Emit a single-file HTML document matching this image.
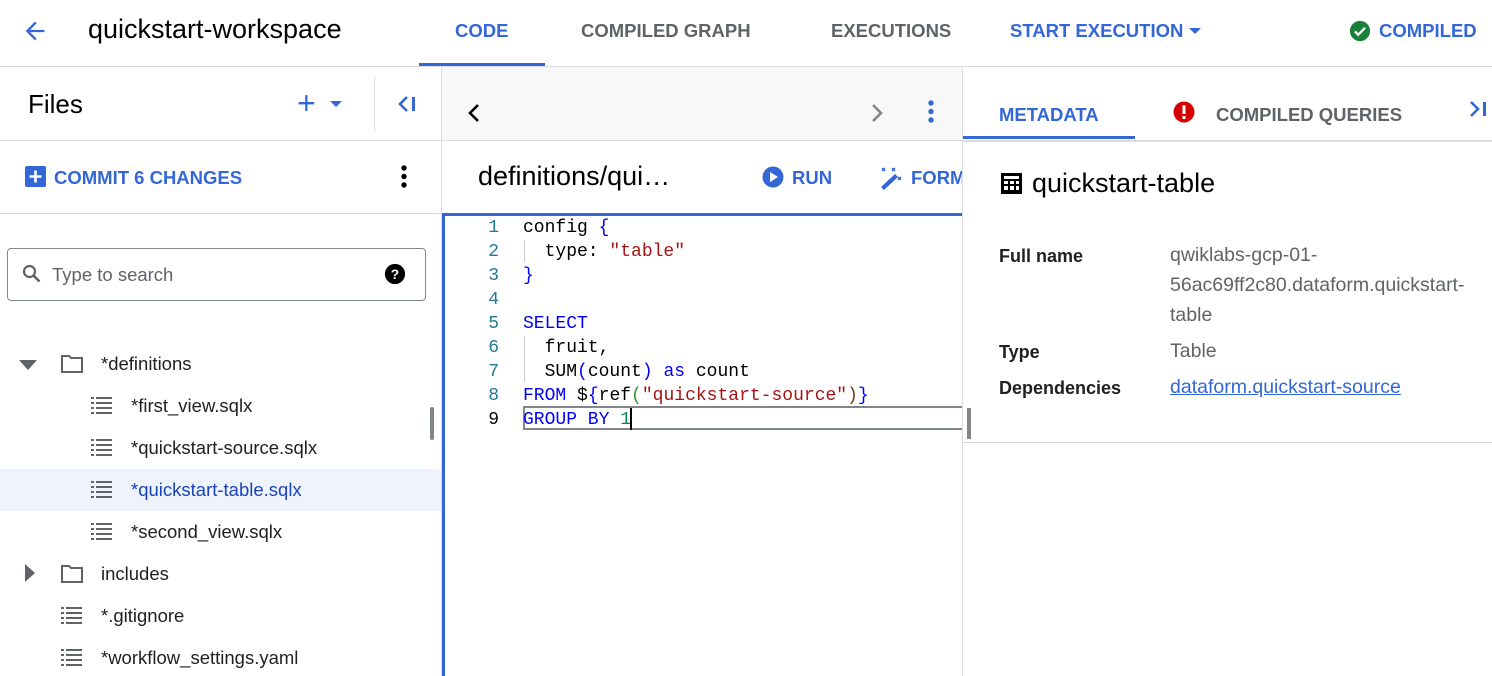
<!DOCTYPE html>
<html><head><meta charset="utf-8"><style>
*{margin:0;padding:0;box-sizing:border-box}
body{width:1492px;height:676px;overflow:hidden;background:#fff;font-family:"Liberation Sans",Arial,sans-serif;color:#202124;position:relative}
.a{position:absolute;white-space:nowrap}
.tab{font-size:18.5px;font-weight:bold;color:#5f6368;top:20px}
.blue{color:#3367d6}
.line{position:absolute;background:#dadce0}
.tree{font-size:18.5px;color:#202124}
.ln{position:absolute;left:446px;width:53px;text-align:right;color:#237893;font-family:"Liberation Mono",monospace;font-size:18px}
.cl{position:absolute;left:523px;font-family:"Liberation Mono",monospace;font-size:18px;color:#000;white-space:pre}
.k{color:#0000ff}.s{color:#a31515}.n{color:#098658}
.lbl{font-size:18px;font-weight:bold;color:#202124}
.val{font-size:19.5px;color:#5f6368;line-height:30px}
</style></head><body>
<svg class="a" style="left:21px;top:17px" width="28" height="28" viewBox="0 0 24 24"><path d="M20 11H7.8l5.6-5.6L12 4l-8 8 8 8 1.4-1.4L7.8 13H20z" fill="#3367d6"/></svg>
<div class="a" style="left:88px;top:14px;font-size:27px;color:#000">quickstart-workspace</div>
<div class="a tab blue" style="left:455px">CODE</div>
<div class="a" style="left:419px;top:63px;width:126px;height:3px;background:#3367d6"></div>
<div class="a tab" style="left:581px">COMPILED GRAPH</div>
<div class="a tab" style="left:831px">EXECUTIONS</div>
<div class="a tab blue" style="left:1010px">START EXECUTION</div>
<svg class="a" style="left:1188px;top:27px" width="14" height="8" viewBox="0 0 14 8"><path d="M1 1h12L7 7z" fill="#3367d6"/></svg>
<svg class="a" style="left:1349px;top:20px" width="22" height="22" viewBox="0 0 24 24"><circle cx="12" cy="12" r="11" fill="#188038"/><path d="M6.5 12.5l3.5 3.5 7.5-7.5" stroke="#fff" stroke-width="2.6" fill="none"/></svg>
<div class="a tab blue" style="left:1379px">COMPILED</div>
<div class="line" style="left:0;top:66px;width:1492px;height:1px"></div>

<div class="line" style="left:441px;top:67px;width:1px;height:609px"></div>
<div class="a" style="left:28px;top:89px;font-size:26px;color:#000">Files</div>
<div class="a blue" style="left:297px;top:86px;font-size:32px;line-height:34px">+</div>
<svg class="a" style="left:329px;top:100px" width="14" height="8" viewBox="0 0 14 8"><path d="M1 1h12L7 7z" fill="#3367d6"/></svg>
<div class="line" style="left:374px;top:77px;width:1px;height:54px"></div>
<svg class="a" style="left:396px;top:94px" width="22" height="20" viewBox="0 0 22 20"><path d="M11 3L4 10l7 7" stroke="#3367d6" stroke-width="2.6" fill="none"/><rect x="16" y="3" width="3" height="14" fill="#3367d6"/></svg>
<div class="line" style="left:0;top:140px;width:441px;height:1px"></div>
<svg class="a" style="left:25px;top:166px" width="21" height="21" viewBox="0 0 21 21"><rect width="21" height="21" rx="2" fill="#3367d6"/><path d="M10.5 4.5v12M4.5 10.5h12" stroke="#fff" stroke-width="2.6"/></svg>
<div class="a blue" style="left:54px;top:167px;font-size:18.5px;font-weight:bold">COMMIT 6 CHANGES</div>
<svg class="a" style="left:399px;top:164px" width="10" height="26" viewBox="0 0 10 26"><circle cx="5" cy="4" r="2.7"/><circle cx="5" cy="12.5" r="2.7"/><circle cx="5" cy="21" r="2.7"/></svg>
<div class="line" style="left:0;top:213px;width:441px;height:1px"></div>
<div class="a" style="left:7px;top:248px;width:419px;height:53px;border:1px solid #80868b;border-radius:4px"></div>
<svg class="a" style="left:21px;top:263px" width="22" height="22" viewBox="0 0 22 22"><circle cx="8.5" cy="8.5" r="5.5" stroke="#5f6368" stroke-width="2.2" fill="none"/><path d="M12.5 12.5l6 6" stroke="#5f6368" stroke-width="2.6"/></svg>
<div class="a" style="left:52px;top:264px;font-size:18.5px;color:#5f6368">Type to search</div>
<svg class="a" style="left:384px;top:263px" width="22" height="22" viewBox="0 0 24 24"><circle cx="12" cy="12" r="11" fill="#000"/><text x="12" y="17.5" font-size="15" font-weight="bold" text-anchor="middle" fill="#fff" font-family="Liberation Sans">?</text></svg>

<div class="a" style="left:0;top:469px;width:441px;height:42px;background:#eef3fd"></div>
<div class="a" style="left:430px;top:407px;width:4px;height:33px;background:#80868b;border-radius:2px"></div>
<svg class="a" style="left:19px;top:360px" width="18" height="10" viewBox="0 0 18 10"><path d="M0 0h18L9 10z" fill="#5f6368"/></svg>
<svg class="a" style="left:60px;top:354px" width="24" height="20" viewBox="0 0 24 20"><path d="M2 2h7l2 2h11v14H2z" fill="none" stroke="#5f6368" stroke-width="2"/></svg>
<div class="a tree" style="left:101px;top:353px">*definitions</div>
<svg class="a" style="left:25px;top:564px" width="10" height="18" viewBox="0 0 10 18"><path d="M0 0l10 9-10 9z" fill="#5f6368"/></svg>
<svg class="a" style="left:60px;top:564px" width="24" height="20" viewBox="0 0 24 20"><path d="M2 2h7l2 2h11v14H2z" fill="none" stroke="#5f6368" stroke-width="2"/></svg>
<div class="a tree" style="left:101px;top:563px">includes</div>
<svg width="0" height="0" style="position:absolute"><defs><g id="li"><rect x="0" y="1" width="3" height="2"/><rect x="5" y="1" width="16" height="2"/><rect x="0" y="6" width="3" height="2"/><rect x="5" y="6" width="16" height="2"/><rect x="0" y="11" width="3" height="2"/><rect x="5" y="11" width="16" height="2"/><rect x="0" y="16" width="3" height="2"/><rect x="5" y="16" width="16" height="2"/></g></defs></svg>
<svg class="a" style="left:91px;top:396px" width="22" height="19"><use href="#li" fill="#5f6368"/></svg>
<svg class="a" style="left:91px;top:438px" width="22" height="19"><use href="#li" fill="#5f6368"/></svg>
<svg class="a" style="left:91px;top:480px" width="22" height="19"><use href="#li" fill="#5f6368"/></svg>
<svg class="a" style="left:91px;top:522px" width="22" height="19"><use href="#li" fill="#5f6368"/></svg>
<svg class="a" style="left:61px;top:606px" width="22" height="19"><use href="#li" fill="#5f6368"/></svg>
<svg class="a" style="left:61px;top:648px" width="22" height="19"><use href="#li" fill="#5f6368"/></svg>
<div class="a tree" style="left:131px;top:395px">*first_view.sqlx</div>
<div class="a tree" style="left:131px;top:437px">*quickstart-source.sqlx</div>
<div class="a tree" style="left:131px;top:479px;color:#1a44b8">*quickstart-table.sqlx</div>
<div class="a tree" style="left:131px;top:521px">*second_view.sqlx</div>
<div class="a tree" style="left:101px;top:605px">*.gitignore</div>
<div class="a tree" style="left:101px;top:647px">*workflow_settings.yaml</div>

<div class="a" style="left:442px;top:67px;width:520px;height:73px;background:#f8f8f8"></div>
<div class="line" style="left:442px;top:140px;width:520px;height:1px"></div>
<svg class="a" style="left:467px;top:103px" width="14" height="20" viewBox="0 0 14 20"><path d="M11 2L3 10l8 8" stroke="#000" stroke-width="2.6" fill="none"/></svg>
<svg class="a" style="left:870px;top:103px" width="14" height="20" viewBox="0 0 14 20"><path d="M3 2l8 8-8 8" stroke="#80868b" stroke-width="2.6" fill="none"/></svg>
<svg class="a" style="left:926px;top:99px" width="10" height="26" viewBox="0 0 10 26"><circle cx="5" cy="4" r="2.7" fill="#3367d6"/><circle cx="5" cy="12.5" r="2.7" fill="#3367d6"/><circle cx="5" cy="21" r="2.7" fill="#3367d6"/></svg>
<div class="a" style="left:478px;top:161px;font-size:27px;color:#000">definitions/qui…</div>
<svg class="a" style="left:762px;top:166px" width="22" height="22" viewBox="0 0 22 22"><circle cx="11" cy="11" r="10.5" fill="#3367d6"/><path d="M8 6v10l8-5z" fill="#fff"/></svg>
<div class="a blue" style="left:792px;top:167px;font-size:18.5px;font-weight:bold">RUN</div>
<svg class="a" style="left:879px;top:165px" width="26" height="26" viewBox="0 0 26 26"><path d="M2 22L16 9l3 3L5 25z" fill="#3367d6"/><g stroke="#3367d6" stroke-width="1.5"><path d="M3 3l3 3M6 3l-3 3M13 3l3 3M16 3l-3 3M19 12l3 3M22 12l-3 3"/></g></svg>
<div class="a blue" style="left:911px;top:167px;font-size:18.5px;font-weight:bold;width:51px;overflow:hidden">FORMAT</div>
<div class="a" style="left:442px;top:213px;width:520px;height:463px;border-top:3px solid #3367d6;border-left:3px solid #3367d6"></div>
<div class="a" style="left:523px;top:406px;width:439px;height:24px;border:2px solid #80868b;border-right:none"></div>
<div class="a" style="left:967px;top:408px;width:4px;height:31px;background:#80868b"></div>
<div class="a" style="left:524px;top:240px;width:1px;height:22px;background:#ccc"></div>
<div class="a" style="left:524px;top:336px;width:1px;height:46px;background:#ccc"></div>
<div class="ln" style="top:218px">1</div><div class="ln" style="top:242px">2</div><div class="ln" style="top:266px">3</div><div class="ln" style="top:290px">4</div><div class="ln" style="top:314px">5</div><div class="ln" style="top:338px">6</div><div class="ln" style="top:362px">7</div><div class="ln" style="top:386px">8</div><div class="ln" style="top:410px;color:#000">9</div>
<div class="cl" style="top:218px">config <span class="k">{</span></div>
<div class="cl" style="top:242px">  type: <span class="s">"table"</span></div>
<div class="cl" style="top:266px"><span class="k">}</span></div>
<div class="cl" style="top:314px"><span class="k">SELECT</span></div>
<div class="cl" style="top:338px">  fruit,</div>
<div class="cl" style="top:362px">  SUM<span class="k">(</span>count<span class="k">)</span> <span class="k">as</span> count</div>
<div class="cl" style="top:386px"><span class="k">FROM</span> $<span class="k">{</span>ref<span style="color:#319331">(</span><span class="s">"quickstart-source"</span><span style="color:#7b3814">)</span><span class="k">}</span></div>
<div class="cl" style="top:410px"><span class="k">GROUP BY</span> <span class="n">1</span></div>
<div class="a" style="left:630px;top:408px;width:2px;height:22px;background:#000"></div>

<div class="line" style="left:962px;top:67px;width:1px;height:609px"></div>
<div class="a blue" style="left:999px;top:104px;font-size:18.5px;font-weight:bold">METADATA</div>
<div class="a" style="left:963px;top:136px;width:172px;height:3px;background:#3367d6"></div>
<svg class="a" style="left:1173px;top:101px" width="22" height="22" viewBox="0 0 22 22"><circle cx="11" cy="11" r="10.5" fill="#d50000"/><rect x="9.5" y="4.5" width="3" height="8.5" fill="#fff"/><rect x="9.5" y="15" width="3" height="3" fill="#fff"/></svg>
<div class="a tab" style="left:1216px;top:104px">COMPILED QUERIES</div>
<svg class="a" style="left:1468px;top:99px" width="20" height="20" viewBox="0 0 20 20"><path d="M3 3l7 7-7 7" stroke="#3367d6" stroke-width="2.6" fill="none"/><rect x="15" y="3" width="3" height="14" fill="#3367d6"/></svg>
<div class="line" style="left:963px;top:140px;width:529px;height:2px"></div>
<svg class="a" style="left:1001px;top:173px" width="21" height="21" viewBox="0 0 21 21"><rect width="21" height="21" fill="#000"/><g fill="#fff"><rect x="3" y="3" width="15" height="3"/><rect x="3" y="8" width="4" height="3"/><rect x="9" y="8" width="4" height="3"/><rect x="15" y="8" width="3" height="3"/><rect x="3" y="13" width="4" height="4"/><rect x="9" y="13" width="4" height="4"/><rect x="15" y="13" width="3" height="4"/></g></svg>
<div class="a" style="left:1032px;top:168px;font-size:27px;color:#000">quickstart-table</div>
<div class="a lbl" style="left:999px;top:246px">Full name</div>
<div class="a val" style="left:1170px;top:240px;white-space:normal;width:322px">qwiklabs-gcp-01-<br>56ac69ff2c80.dataform.quickstart-<br>table</div>
<div class="a lbl" style="left:999px;top:342px">Type</div>
<div class="a val" style="left:1170px;top:336px">Table</div>
<div class="a lbl" style="left:999px;top:378px">Dependencies</div>
<div class="a val" style="left:1170px;top:372px;color:#3367d6;text-decoration:underline">dataform.quickstart-source</div>
<div class="line" style="left:963px;top:442px;width:529px;height:1px"></div>
</body></html>
